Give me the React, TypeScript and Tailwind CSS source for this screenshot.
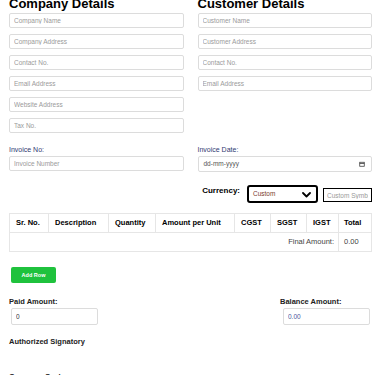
import React from 'react'

const inputCls =
    "block w-full h-[15px] border border-[#dcdcdc] rounded-[2px] bg-white px-[4px] text-[6.5px] text-[#333] placeholder:text-[#9a9a9a] outline-none"

const Field = ({ placeholder }: { placeholder: string }) => (
    <input className={inputCls} placeholder={placeholder} />
)

export default function App() {
    return (
        <div className="w-[375px] h-[375px] overflow-hidden bg-white pl-[9px] pr-[3px] font-['Liberation_Sans',Arial,sans-serif] text-black">
            <div className="grid grid-cols-2 gap-x-[14px]">
                <div>
                    <h2 className="text-[13px] leading-[13px] font-bold -mt-[3px] mb-[3px]">Company Details</h2>
                    <div className="flex flex-col gap-[6px]">
                        <Field placeholder="Company Name" />
                        <Field placeholder="Company Address" />
                        <Field placeholder="Contact No." />
                        <Field placeholder="Email Address" />
                        <Field placeholder="Website Address" />
                        <Field placeholder="Tax No." />
                    </div>
                </div>
                <div>
                    <h2 className="text-[13px] leading-[13px] font-bold -mt-[3px] mb-[3px]">Customer Details</h2>
                    <div className="flex flex-col gap-[6px]">
                        <Field placeholder="Customer Name" />
                        <Field placeholder="Customer Address" />
                        <Field placeholder="Contact No." />
                        <Field placeholder="Email Address" />
                    </div>
                </div>
            </div>

            <div className="grid grid-cols-2 gap-x-[14px] mt-[12px]">
                <div>
                    <label className="block text-[7px] leading-[9px] text-[#2f3a72] mb-[2px]">Invoice No:</label>
                    <Field placeholder="Invoice Number" />
                </div>
                <div>
                    <label className="block text-[7px] leading-[9px] text-[#2f3a72] mb-[2px]">Invoice Date:</label>
                    <div className="flex items-center justify-between h-[16px] border border-[#dcdcdc] rounded-[2px] pl-[5px] pr-[6px] text-[6.5px] text-[#555]">
                        <span>dd-mm-yyyy</span>
                        <svg width="6" height="6" viewBox="0 0 12 12" fill="none" stroke="#333" strokeWidth="1.5">
                            <rect x="1.5" y="2.5" width="9" height="8" />
                            <line x1="1.5" y1="5" x2="10.5" y2="5" />
                        </svg>
                    </div>
                </div>
            </div>

            <div className="flex justify-end items-start mt-[13px]">
                <span className="text-[8px] leading-[10px] font-bold mr-[7px] mt-[1px]">Currency:</span>
                <div className="relative w-[71px] h-[18px] border-2 border-black rounded-[3px] flex items-center px-[4px]">
                    <span className="text-[6.5px] text-[#7a3b2e]">Custom</span>
                    <svg className="absolute right-[5px] top-[5px]" width="9" height="6" viewBox="0 0 9 6" fill="none" stroke="black" strokeWidth="1.8" strokeLinecap="round" strokeLinejoin="round">
                        <path d="M1 1l3.5 3.5L8 1" />
                    </svg>
                </div>
                <input
                    className="ml-[5px] mt-[3px] w-[49px] h-[14px] border border-black px-[3px] text-[6.5px] placeholder:text-[#9a9a9a] outline-none"
                    placeholder="Custom Symbol"
                />
            </div>

            <table className="mt-[10px] w-[363px] border-collapse text-[7.5px] border border-[#e6e6e6]">
                <thead>
                    <tr className="h-[19px]">
                        <th className="w-[39px] border border-[#e6e6e6] text-left font-bold px-[6px]">Sr. No.</th>
                        <th className="w-[60px] border border-[#e6e6e6] text-left font-bold px-[6px]">Description</th>
                        <th className="w-[47px] border border-[#e6e6e6] text-left font-bold px-[6px]">Quantity</th>
                        <th className="w-[79px] border border-[#e6e6e6] text-left font-bold px-[6px]">Amount per Unit</th>
                        <th className="w-[36px] border border-[#e6e6e6] text-left font-bold px-[6px]">CGST</th>
                        <th className="w-[36px] border border-[#e6e6e6] text-left font-bold px-[6px]">SGST</th>
                        <th className="w-[32px] border border-[#e6e6e6] text-left font-bold px-[6px]">IGST</th>
                        <th className="border border-[#e6e6e6] text-left font-bold px-[5px]">Total</th>
                    </tr>
                </thead>
                <tbody>
                    <tr className="h-[19px]">
                        <td colSpan={7} className="border border-[#e6e6e6] text-right px-[4px] text-[#444]">Final Amount:</td>
                        <td className="border border-[#e6e6e6] px-[5px] text-[#444]">0.00</td>
                    </tr>
                </tbody>
            </table>

            <button className="mt-[15px] ml-[2px] w-[45px] h-[16px] rounded-[2px] bg-[#1fc23d] text-white text-[5.5px] font-bold">
                Add Row
            </button>

            <div className="flex justify-between mt-[13px] pr-[1px]">
                <div className="w-[90px]">
                    <label className="block text-[7.5px] leading-[9px] font-bold text-[#222] mb-[2px]">Paid Amount:</label>
                    <input className={inputCls + " ml-[2px] !w-[87px] !h-[17px]"} defaultValue="0" />
                </div>
                <div className="w-[91px]">
                    <label className="block text-[7.5px] leading-[9px] font-bold text-[#222] mb-[2px]">Balance Amount:</label>
                    <input className={inputCls + " ml-[3px] !w-[87px] !h-[17px] !text-[#4a5a9a]"} defaultValue="0.00" readOnly />
                </div>
            </div>

            <p className="mt-[12px] text-[7.5px] leading-[9px] font-bold text-[#222]">Authorized Signatory</p>
            <p className="mt-[26px] text-[7.5px] leading-[9px] font-bold text-[#222]">Company Seal</p>
        </div>
    )
}
